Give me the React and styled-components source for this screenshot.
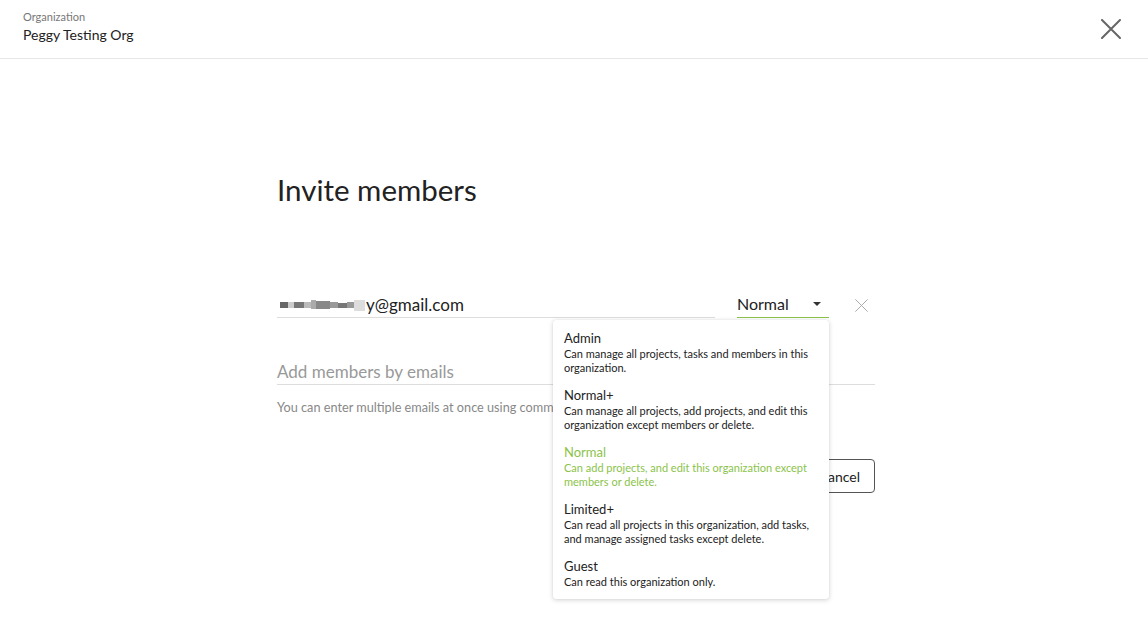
import React from 'react';
import styled, { createGlobalStyle } from 'styled-components';

const GlobalStyle = createGlobalStyle`
  html, body {
    margin: 0;
    padding: 0;
    background: #fff;
    font-family: Lato, "Open Sans", sans-serif;
    color: #222;
  }
`;

const Page = styled.div`
  width: 1148px;
  height: 638px;
  overflow: hidden;
  background: #fff;
`;

const Header = styled.header`
  height: 59px;
  border-bottom: 1px solid #e6e6e6;
  display: flex;
  align-items: flex-start;
  justify-content: space-between;
  padding: 10px 26px 0 23px;
  box-sizing: border-box;
`;

const OrgLabel = styled.div`
  font-size: 11px;
  line-height: 14px;
  color: #777;
`;

const OrgName = styled.div`
  font-size: 14px;
  line-height: 20px;
  margin-top: 1px;
  color: #222;
`;

const CloseButton = styled.button`
  border: 0;
  background: none;
  padding: 0;
  margin-top: 8px;
  width: 22px;
  height: 22px;
  cursor: pointer;
  display: flex;
  align-items: center;
  justify-content: center;
`;

const Main = styled.main`
  width: 598px;
  margin: 0 auto;
  padding-top: 111px;
  transform: translateX(2px);
`;

const Title = styled.h1`
  margin: 0;
  font-size: 29.5px;
  font-weight: 400;
  line-height: 40px;
  color: #222;
`;

const InviteRow = styled.div`
  display: flex;
  align-items: flex-end;
  margin-top: 81px;
`;

const EmailField = styled.div`
  width: 438px;
  height: 26px;
  border-bottom: 1px solid #ddd;
  display: flex;
  align-items: center;
  font-size: 17px;
  color: #222;
`;

const Redacted = styled.span`
  display: inline-flex;
  align-items: center;
  height: 11px;
  margin: 2px 1px 0 3px;
`;

const Pixel = styled.span`
  display: inline-block;
  height: ${(p) => p.h || 6}px;
  width: ${(p) => p.w}px;
  background: ${(p) => p.c};
  align-self: ${(p) => p.align || 'center'};
`;

const RoleSelect = styled.div`
  position: relative;
  margin-left: 22px;
  width: 92px;
`;

const SelectValue = styled.div`
  height: 26px;
  border-bottom: 1px solid #8bc34a;
  display: flex;
  align-items: center;
  justify-content: space-between;
  font-size: 16px;
  color: #222;
  padding: 0 8px 3px 0;
  box-sizing: border-box;
`;

const Caret = styled.span`
  width: 0;
  height: 0;
  border-left: 4px solid transparent;
  border-right: 4px solid transparent;
  border-top: 4px solid #333;
  margin-top: 1px;
`;

const RemoveButton = styled.button`
  border: 0;
  background: none;
  padding: 0;
  margin-left: 24px;
  margin-bottom: 5px;
  width: 16px;
  height: 16px;
  display: flex;
  align-items: center;
  justify-content: center;
`;

const Menu = styled.ul`
  position: absolute;
  top: 28px;
  right: 0;
  width: 276px;
  margin: 0;
  padding: 4px 0;
  list-style: none;
  background: #fff;
  border-radius: 3px;
  box-shadow: 0 1px 5px rgba(0, 0, 0, 0.18), 0 0 1px rgba(0, 0, 0, 0.12);
  z-index: 10;
  box-sizing: border-box;
`;

const MenuItem = styled.li`
  padding: 6px 11px;
  color: ${(p) => (p.active ? '#8bc34a' : '#222')};
`;

const ItemTitle = styled.div`
  font-size: 13px;
  line-height: 16px;
`;

const ItemDesc = styled.div`
  font-size: 11px;
  line-height: 14px;
  margin-top: 1px;
`;

const AddField = styled.div`
  margin-top: 40px;
  width: 100%;
  height: 26px;
  border-bottom: 1px solid #ddd;
  display: flex;
  align-items: center;
  font-size: 17px;
  color: #999;
`;

const Hint = styled.p`
  margin: 14px 0 0;
  font-size: 12.7px;
  line-height: 16px;
  color: #888;
  white-space: nowrap;
`;

const Actions = styled.div`
  display: flex;
  justify-content: flex-end;
  gap: 10px;
  margin-top: 44px;
`;

const Button = styled.button`
  height: 34px;
  padding: 0 14px;
  border-radius: 4px;
  font-family: inherit;
  font-size: 14px;
  border: 1px solid ${(p) => (p.primary ? '#8bc34a' : '#555')};
  background: ${(p) => (p.primary ? '#8bc34a' : '#fff')};
  color: ${(p) => (p.primary ? '#fff' : '#222')};
`;

const roles = [
  { name: 'Admin', desc: 'Can manage all projects, tasks and members in this organization.' },
  { name: 'Normal+', desc: 'Can manage all projects, add projects, and edit this organization except members or delete.' },
  { name: 'Normal', desc: 'Can add projects, and edit this organization except members or delete.' },
  { name: 'Limited+', desc: 'Can read all projects in this organization, add tasks, and manage assigned tasks except delete.' },
  { name: 'Guest', desc: 'Can read this organization only.' },
];

const pixels = [
  { w: 8, c: '#666' },
  { w: 6, c: '#ccc' },
  { w: 10, c: '#777' },
  { w: 7, c: '#bbb' },
  { w: 5, c: '#aaa', h: 9, align: 'flex-start' },
  { w: 14, c: '#888', h: 8 },
  { w: 8, c: '#999' },
  { w: 9, c: '#777', h: 5 },
  { w: 7, c: '#999', h: 6 },
  { w: 11, c: '#ddd', h: 11 },
];

const Cross = ({ size, color, width }) => (
  <svg width={size} height={size} viewBox="0 0 20 20" fill="none">
    <path d="M1 1L19 19M19 1L1 19" stroke={color} strokeWidth={width} strokeLinecap="round" />
  </svg>
);

export default function App() {
  return (
    <Page>
      <GlobalStyle />
      <Header>
        <div>
          <OrgLabel>Organization</OrgLabel>
          <OrgName>Peggy Testing Org</OrgName>
        </div>
        <CloseButton aria-label="Close">
          <Cross size={20} color="#666" width={2} />
        </CloseButton>
      </Header>
      <Main>
        <Title>Invite members</Title>
        <InviteRow>
          <EmailField>
            <Redacted>
              {pixels.map((p, i) => (
                <Pixel key={i} {...p} />
              ))}
            </Redacted>
            y@gmail.com
          </EmailField>
          <RoleSelect>
            <SelectValue>
              Normal
              <Caret />
            </SelectValue>
            <Menu>
              {roles.map((r) => (
                <MenuItem key={r.name} active={r.name === 'Normal'}>
                  <ItemTitle>{r.name}</ItemTitle>
                  <ItemDesc>{r.desc}</ItemDesc>
                </MenuItem>
              ))}
            </Menu>
          </RoleSelect>
          <RemoveButton aria-label="Remove">
            <Cross size={13} color="#aaa" width={1.5} />
          </RemoveButton>
        </InviteRow>
        <AddField>Add members by emails</AddField>
        <Hint>You can enter multiple emails at once using commas or spaces.</Hint>
        <Actions>
          <Button primary>Invite</Button>
          <Button>Cancel</Button>
        </Actions>
      </Main>
    </Page>
  );
}
